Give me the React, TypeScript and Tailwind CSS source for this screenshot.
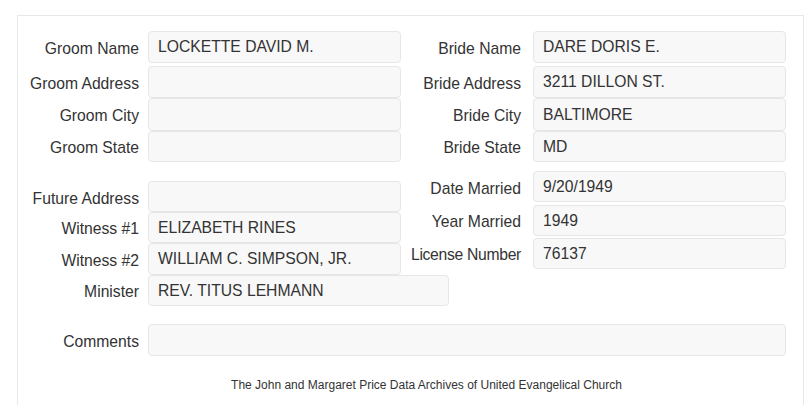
type Row = {
  label: string;
  value: string;
  mt: string;
  h: string;
  w?: string;
  labelCls?: string;
};

const leftRows: Row[] = [
  { label: "Groom Name", value: "LOCKETTE DAVID M.", mt: "mt-[15px]", h: "h-[32px]" },
  { label: "Groom Address", value: "", mt: "mt-[3px]", h: "h-[32px]" },
  { label: "Groom City", value: "", mt: "mt-0", h: "h-[33px]" },
  { label: "Groom State", value: "", mt: "mt-0", h: "h-[31px]" },
  { label: "Future Address", value: "", mt: "mt-[19px]", h: "h-[31px]", labelCls: "pt-[4px]" },
  { label: "Witness #1", value: "ELIZABETH RINES", mt: "mt-0", h: "h-[31px]" },
  { label: "Witness #2", value: "WILLIAM C. SIMPSON, JR.", mt: "mt-0", h: "h-[32px]", labelCls: "pt-[4px]" },
  { label: "Minister", value: "REV. TITUS LEHMANN", mt: "mt-0", h: "h-[31px]", w: "w-[301px]" },
];

const rightRows: Row[] = [
  { label: "Bride Name", value: "DARE DORIS E.", mt: "mt-[15px]", h: "h-[32px]" },
  { label: "Bride Address", value: "3211 DILLON ST.", mt: "mt-[3px]", h: "h-[32px]" },
  { label: "Bride City", value: "BALTIMORE", mt: "mt-0", h: "h-[33px]" },
  { label: "Bride State", value: "MD", mt: "mt-0", h: "h-[31px]" },
  { label: "Date Married", value: "9/20/1949", mt: "mt-[9px]", h: "h-[31px]", labelCls: "pt-[4px]" },
  { label: "Year Married", value: "1949", mt: "mt-[3px]", h: "h-[31px]", labelCls: "pt-[3px]" },
  { label: "License Number", value: "76137", mt: "mt-[2px]", h: "h-[31px]", labelCls: "pt-[3px] -mr-[3px] tracking-[-0.3px]" },
];

function Input({ value, h, w }: { value: string; h: string; w?: string }) {
  return (
    <div
      className={`${h} ${w ?? "w-[253px]"} shrink-0 rounded-[4px] border border-[#e6e6e6] bg-[#f8f8f8] pl-[9px] flex items-center text-[15.7px] text-[#333] leading-none`}
    >
      <span>{value}</span>
    </div>
  );
}

function Field({ row, labelW, gap }: { row: Row; labelW: string; gap: string }) {
  return (
    <div className={`flex items-center ${row.mt}`}>
      <div className={`${labelW} ${gap} shrink-0 text-right text-[15.7px] text-[#333] whitespace-nowrap ${row.labelCls ?? "pt-[3px]"}`}>
        {row.label}
      </div>
      <Input value={row.value} h={row.h} w={row.w} />
    </div>
  );
}

export default function App() {
  return (
    <div className="w-[805px] h-[405px] overflow-hidden bg-white font-['Liberation_Sans',Arial,sans-serif]">
      <div className="ml-[17px] mt-[15px] w-[787px] h-[420px] border border-[#e8e8e8]">
        <div className="flex">
          <div className="flex flex-col w-[383px]">
            {leftRows.map((r) => (
              <Field key={r.label} row={r} labelW="w-[121px]" gap="mr-[9px]" />
            ))}
          </div>
          <div className="flex flex-col">
            {rightRows.map((r) => (
              <Field key={r.label} row={r} labelW="w-[120px]" gap="mr-[12px]" />
            ))}
          </div>
        </div>
        <div className="flex items-center mt-[18px]">
          <div className="w-[121px] mr-[9px] shrink-0 text-right text-[15.7px] text-[#333] pt-[3px]">
            Comments
          </div>
          <Input value="" h="h-[32px]" w="w-[638px]" />
        </div>
        <div className="pl-[32px] mt-[20px] text-center text-[12px] text-[#333]">
          The John and Margaret Price Data Archives of United Evangelical Church
        </div>
      </div>
    </div>
  );
}
